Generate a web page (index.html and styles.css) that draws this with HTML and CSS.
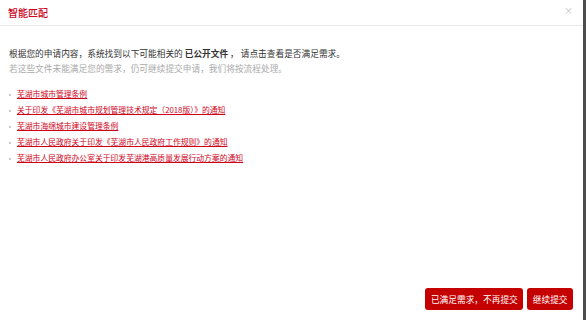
FILE: index.html
```html
<!doctype html>
<html lang="zh-CN">
  <head>
    <meta charset="UTF-8" />
    <meta name="viewport" content="width=device-width, initial-scale=1.0" />
    <title>智能匹配</title>
    <link rel="stylesheet" href="styles.css">
  </head>
  <body>
    <div class="modal">
      <div class="modal-header">
        <span class="modal-title">智能匹配</span>
        <span class="modal-close">×</span>
      </div>

      <div class="modal-body">
        <p class="intro">根据您的申请内容，系统找到以下可能相关的 <b>已公开文件</b> ， 请点击查看是否满足需求。</p>
        <p class="hint">若这些文件未能满足您的需求，仍可继续提交申请，我们将按流程处理。</p>

        <ul class="doc-list">
          <li><a href="#">芜湖市城市管理条例</a></li>
          <li><a href="#">关于印发《芜湖市城市规划管理技术规定（2018版）》的通知</a></li>
          <li><a href="#">芜湖市海绵城市建设管理条例</a></li>
          <li><a href="#">芜湖市人民政府关于印发《芜湖市人民政府工作规则》的通知</a></li>
          <li><a href="#">芜湖市人民政府办公室关于印发芜湖港高质量发展行动方案的通知</a></li>
        </ul>
      </div>

      <div class="modal-footer">
        <button class="btn">已满足需求，不再提交</button>
        <button class="btn">继续提交</button>
      </div>
    </div>
  </body>
</html>
```

FILE: styles.css
```css
body {
  margin: 0;
  background: #4d4d4d;
  font-family: 'Noto Sans CJK SC', 'Noto Sans', sans-serif;
}

.modal {
  display: flex;
  flex-direction: column;
  background: #fff;
  width: 583px;
  height: 320px;
}

.modal-header {
  display: flex;
  justify-content: space-between;
  align-items: center;
  border-bottom: 1px solid #e9e9e9;
  padding: 0 10px 0 8px;
  height: 25px;
}

.modal-title {
  color: #d0021b;
  font-size: 10px;
  font-weight: 500;
}

.modal-close {
  color: #bbb;
  font-size: 9px;
  line-height: 1;
  margin-top: -4px;
}

.modal-body {
  padding: 20px 9px 0 9px;
}

.intro,
.hint {
  margin: 0;
  font-size: 8.7px;
  line-height: 15px;
}

.intro {
  color: #333;
}

.intro b {
  font-weight: 700;
}

.hint {
  color: #aaa;
}

.doc-list {
  margin: 10px 0 0 0;
  padding: 0;
  list-style: none;
}

.doc-list li {
  position: relative;
  padding-left: 8px;
  font-size: 7.8px;
  line-height: 16px;
}

.doc-list li::before {
  content: '';
  position: absolute;
  left: 0;
  top: 8px;
  border-radius: 50%;
  background: #bbb;
  width: 2px;
  height: 2px;
}

.doc-list a {
  color: #d0021b;
  text-decoration: underline;
}

.modal-footer {
  display: flex;
  justify-content: flex-end;
  gap: 4px;
  margin-top: auto;
  padding: 0 10px 10px 0;
}

.btn {
  border: none;
  border-radius: 3px;
  background: #c40000;
  padding: 0 5.5px;
  height: 22px;
  color: #fff;
  font-size: 8.7px;
  font-family: inherit;
}
```
